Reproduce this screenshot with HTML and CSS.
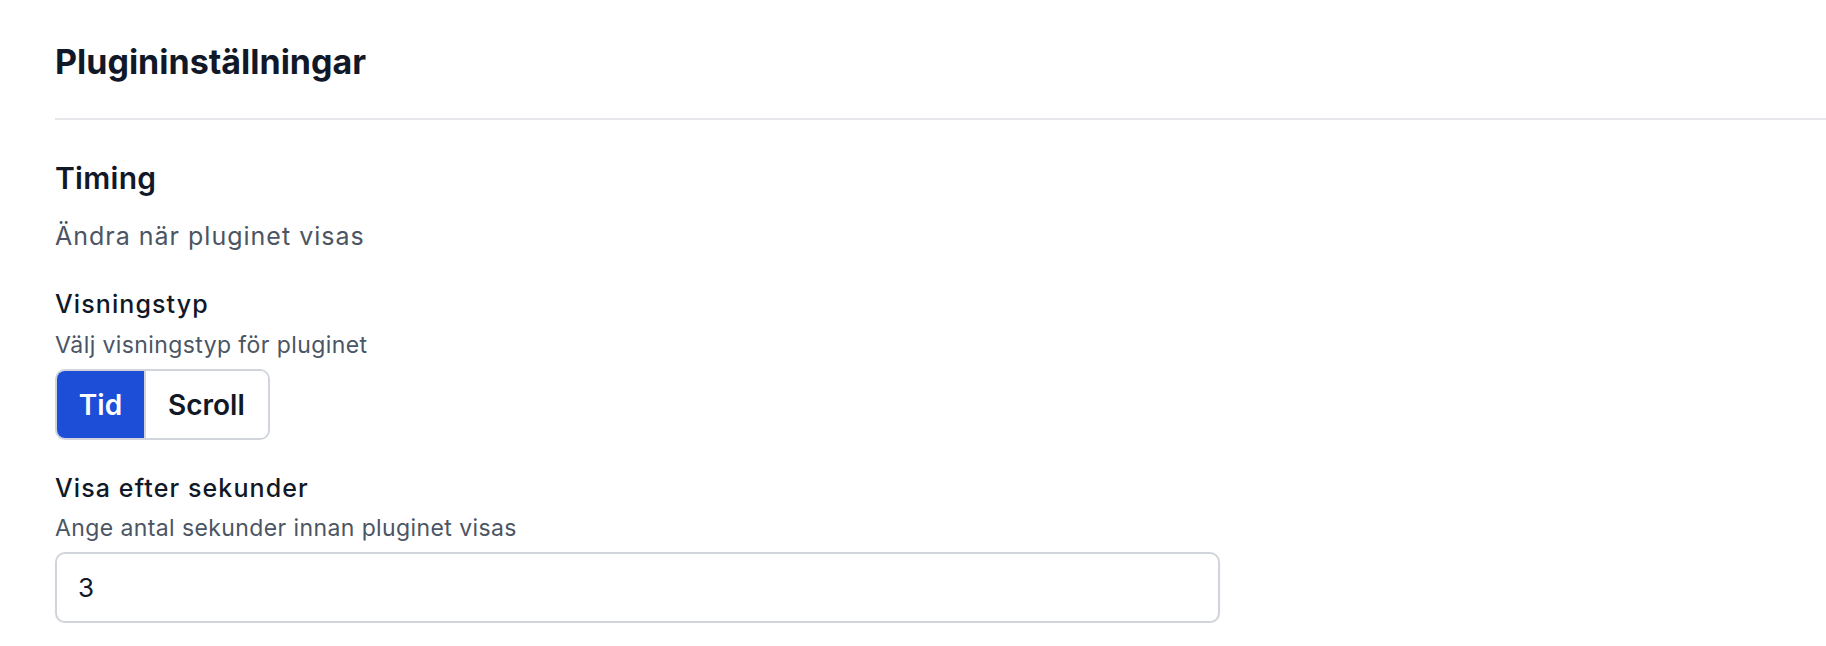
FILE: index.html
```html
<!DOCTYPE html>
<html lang="sv">
<head>
<meta charset="utf-8">
<title>Plugininställningar</title>
<link rel="stylesheet" href="styles.css">
</head>
<body>
<div class="page">
  <header class="header">
    <h1 class="title">Plugininställningar</h1>
  </header>
  <section class="section">
    <h2 class="section-title">Timing</h2>
    <p class="section-desc">Ändra när pluginet visas</p>

    <div class="field field-type">
      <div class="label">Visningstyp</div>
      <div class="hint">Välj visningstyp för pluginet</div>
      <div class="segmented">
        <button class="seg seg-active" type="button">Tid</button>
        <button class="seg" type="button">Scroll</button>
      </div>
    </div>

    <div class="field field-seconds">
      <div class="label">Visa efter sekunder</div>
      <div class="hint">Ange antal sekunder innan pluginet visas</div>
      <input class="text-input" type="text" value="3">
    </div>
  </section>
</div>
</body>
</html>
```

FILE: styles.css
```css
* { box-sizing: border-box; }
html, body { margin: 0; padding: 0; background: #ffffff; }
body {
  font-family: Inter, "Noto Sans", "Liberation Sans", sans-serif;
  color: #111827;
  overflow: hidden;
}
.page {
  padding-left: 55px;
  width: 1900px;
}
.header {
  padding-top: 42px;
  padding-bottom: 36px;
  border-bottom: 2px solid #e5e7eb;
}
.title {
  margin: 0;
  font-size: 34px;
  line-height: 40px;
  font-weight: 700;
  color: #111827;
}
.section {
  padding-top: 40px;
  width: 1165px;
}
.section-title {
  margin: 0;
  font-size: 30px;
  line-height: 36px;
  font-weight: 600;
  letter-spacing: 0.3px;
}
.section-desc {
  margin: 24px 0 0;
  font-size: 25px;
  line-height: 32px;
  letter-spacing: 1px;
  color: #4b5563;
}
.field { display: flex; flex-direction: column; align-items: flex-start; }
.field-type { margin-top: 36px; }
.field-seconds { margin-top: 32px; }
.label {
  font-size: 25px;
  line-height: 32px;
  font-weight: 500;
  letter-spacing: 1.1px;
  color: #111827;
}
.hint {
  margin-top: 11px;
  font-size: 23px;
  line-height: 28px;
  letter-spacing: 0.4px;
  color: #4b5563;
}
.segmented {
  margin-top: 10px;
  display: flex;
  border: 2px solid #d1d5db;
  border-radius: 10px;
  overflow: hidden;
  height: 71px;
}
.seg {
  font-family: inherit;
  font-size: 28px;
  font-weight: 600;
  color: #111827;
  background: #ffffff;
  border: 0;
  padding: 0 23px 0 22px;
  margin: 0;
}
.seg-active {
  background: #1d4ed8;
  color: #ffffff;
  width: 87px;
  padding: 0;
}
.seg + .seg { border-left: 2px solid #d1d5db; }
.field-seconds .hint { margin-top: 10px; }
.text-input {
  margin-top: 10px;
  width: 1165px;
  height: 71px;
  border: 2px solid #d1d5db;
  border-radius: 10px;
  padding: 0 21px;
  font-family: inherit;
  font-size: 26px;
  color: #111827;
  background: #fff;
  box-shadow: 0 1px 2px rgba(0,0,0,0.05);
  outline: none;
}
```
